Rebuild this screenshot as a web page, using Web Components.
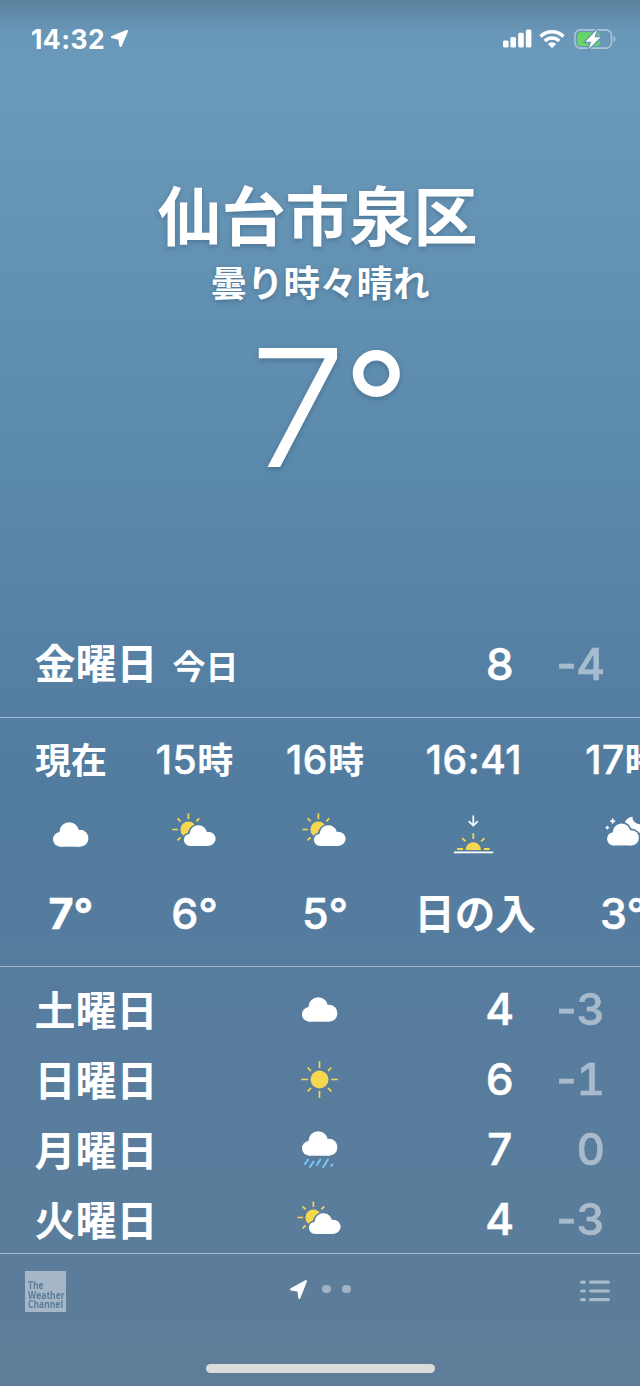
<!DOCTYPE html>
<html lang="ja">
<head>
<meta charset="utf-8">
<title>天気</title>
<style>
html,body{margin:0;padding:0}
body{width:640px;height:1386px;overflow:hidden;font-family:Inter,"Noto Sans CJK JP",sans-serif;color:#fff}
</style>
</head>
<body>
<weather-app></weather-app>
<script>
const define = (name, html, setup) => {
  const t = document.createElement('template');
  t.innerHTML = html;
  customElements.define(name, class extends HTMLElement {
    connectedCallback() {
      if (this.shadowRoot) return;
      const root = this.attachShadow({mode: 'open'});
      root.append(t.content.cloneNode(true));
      if (setup) setup(this, root);
    }
  });
};

const cloud = t => `<g transform="${t}"><circle cx="7.3" cy="17.4" r="7.3"/><circle cx="16.2" cy="9.9" r="9.7"/><circle cx="26.9" cy="16.2" r="8.5"/><rect x="7" y="12" width="20" height="12.7"/></g>`;
const masked = (t, w, h) => `<mask id="m" maskUnits="userSpaceOnUse" x="-2" y="-2" width="${w + 4}" height="${h + 4}"><rect x="-2" y="-2" width="${w + 4}" height="${h + 4}" fill="#fff"/><g fill="#000" stroke="#000" stroke-width="3.6">${cloud(t)}</g></mask>`;
const Y = '#f6d750';
const ICONS = {
  cloud: [36, 25, `<g fill="#fff">${cloud('')}</g>`],
  partly: [44, 33, masked('translate(11.8 12.2) scale(.9 .84)', 44, 33) +
    `<g mask="url(#m)"><circle cx="16.4" cy="16.4" r="8" fill="${Y}"/></g>
     <path d="M16.4.4V6M.4 16.5H6M5.6 5.4 8.6 8.4M27.2 5.4 24.4 8.4M5.6 27.4 8.6 24.4" stroke="${Y}" stroke-width="1.7"/>
     <g fill="#fff">${cloud('translate(11.8 12.2) scale(.9 .84)')}</g>`],
  sun: [37, 37, `<circle cx="18.5" cy="18.5" r="9" fill="${Y}"/><path d="M18.5.2V6.9M18.5 30.1V36.8M.2 18.5H6.9M30.1 18.5H36.8M6.7 6.7 10 10M30.3 6.7 27 10M6.7 30.3 10 27M30.3 30.3 27 27" stroke="${Y}" stroke-width="1.7"/>`],
  rain: [36, 37, `<g fill="#fff">${cloud('')}</g><path d="M6 28.6 3 33M11.6 30.6 7.9 36M18.3 28.6 15 33.8M25.9 28.6 21.2 36M30.3 33.6 29.4 34.8" stroke="#79c3f4" stroke-width="2.1" stroke-linecap="round"/>`],
  sunset: [39, 38, `<path d="M11.6 35A7.7 7.7 0 1 1 27 35Z" fill="${Y}"/><path d="M19.3 18.2V24M8.3 23.2 11.5 26.4M30.4 23.2 27.2 26.4M3.2 34H9M29.8 34H35.6" stroke="${Y}" stroke-width="1.8"/><path d="M19.3.6V10.2M14.7 6.2 19.3 10.6 23.9 6.2" fill="none" stroke="#fff" stroke-width="1.7"/><path d="M0 37.3H39.2" stroke="#fff" stroke-width="1.8"/>`],
  night: [36, 32, masked('translate(2 9.2) scale(.9)', 50, 32) +
    `<g mask="url(#m)"><path d="M27.6 2.4C23.2 3.3 20.2 6 19.4 9.6L22 18 34 19 41 13C42 11 41.6 10 41.6 9.4 33.6 12.2 26.5 8.2 27.6 2.4Z" fill="#fff"/></g>
     <path d="M7.7 4.3Q8.1 6.7 10.4 7.1 8.1 7.5 7.7 9.9 7.3 7.5 5 7.1 7.3 6.7 7.7 4.3ZM2.3 11.8Q2.6 13.4 4.2 13.7 2.6 14 2.3 15.6 2 14 .4 13.7 2 13.4 2.3 11.8Z" fill="#fff" stroke="#fff" stroke-width=".5"/>
     <g fill="#fff">${cloud('translate(2 9.2) scale(.9)')}</g>`],
  arrow: [17, 17, '<path d="M15.8 1.2 1.2 7.2 8.4 8.7 9.6 15.8Z" fill="#fff" stroke="#fff" stroke-width="2.4" stroke-linejoin="round"/>'],
  page: [17, 19, '<path d="M15.9 1.2 1.2 9.3 8.5 10.7 9.3 17.8Z" fill="#fff" stroke="#fff" stroke-width="2.2" stroke-linejoin="round"/>'],
  signal: [29, 19, '<g fill="#fff"><rect x="0" y="11.6" width="5.6" height="7" rx="1.5"/><rect x="7.4" y="8" width="5.6" height="10.6" rx="1.5"/><rect x="15.2" y="3.7" width="5.6" height="14.9" rx="1.5"/><rect x="22.8" y=".6" width="5.6" height="18" rx="1.5"/></g>'],
  wifi: [26, 19, '<g fill="none" stroke="#fff" stroke-width="3.5"><path d="M1.5 7.6A16.3 16.3 0 0 1 24.5 7.6"/><path d="M5.8 12A10.3 10.3 0 0 1 20.2 12"/></g><path d="M8.8 14.9A6 6 0 0 1 17.2 14.9L13 19Z" fill="#fff"/>'],
  battery: [42, 22, `<mask id="b"><rect width="42" height="22" fill="#fff"/><path d="M22.8 1.8 11.5 13.7H17.3L14.8 20.8 26.5 9.2H20.5Z" fill="#000" stroke="#000" stroke-width="3"/></mask>
    <g mask="url(#b)"><rect x=".9" y="1.9" width="36.6" height="18.2" rx="5.5" fill="none" stroke="#fff" stroke-opacity=".45" stroke-width="1.6"/><rect x="3.3" y="4.2" width="22.5" height="13.7" rx="3" fill="#65d763"/></g>
    <path d="M39.5 8V14Q41.5 13.3 41.5 11 41.5 8.7 39.5 8Z" fill="#fff" fill-opacity=".45"/>
    <path d="M22.8 1.8 11.5 13.7H17.3L14.8 20.8 26.5 9.2H20.5Z" fill="#fff"/>`],
  list: [30, 22, '<g stroke="#fff" stroke-opacity=".48" stroke-width="3.2" stroke-linecap="round"><path d="M1.7 2.2H4.3M10.6 2.2H28.3M1.7 11H4.3M10.6 11H28.3M1.7 19.7H4.3M10.6 19.7H28.3"/></g>']
};

define('wx-icon', '<style>:host{display:block;flex:none;line-height:0}svg{display:block;overflow:visible}</style><span></span>', (el, root) => {
  const [w, h, body] = ICONS[el.getAttribute('name')];
  root.querySelector('span').innerHTML = `<svg width="${w}" height="${h}" viewBox="0 0 ${w} ${h}">${body}</svg>`;
});

define('status-bar', `<style>
:host{display:flex;height:77px;box-sizing:border-box;padding:0 24px 0 31px;align-items:center}
.time{font-size:26.5px;font-weight:700;letter-spacing:.4px;width:80px;white-space:nowrap}
.right{margin-left:auto;display:flex;align-items:center;gap:9px}
.right :first-child{margin-right:-1.5px}
</style><div class="time">14:32</div><wx-icon name="arrow"></wx-icon>
<div class="right"><wx-icon name="signal"></wx-icon><wx-icon name="wifi"></wx-icon><wx-icon name="battery"></wx-icon></div>`);

define('city-header', `<style>
:host{display:flex;flex-direction:column;align-items:center;height:534px;box-sizing:border-box;padding-top:102px;text-shadow:0 2px 5px rgba(20,50,80,.3)}
h1{margin:0;font-size:64px;line-height:76px;font-weight:700;margin-right:5px}
p{margin:0;font-size:36.5px;line-height:56px;font-weight:700;padding-top:1px}
.temp{display:flex;font-size:164px;line-height:160px;font-weight:300;margin:16px 0 0 21px}
.num{transform:scaleX(1.05)}
.deg{font-size:143px;font-weight:400;margin-top:-5px}
</style><h1><slot name="city"></slot></h1><p><slot name="sky"></slot></p>
<div class="temp"><div class="num"><slot name="temp"></slot></div><span class="deg">°</span></div>`);

define('day-row', `<style>
:host{display:grid;grid-template-columns:260px 119px 1fr 91px;align-items:center;height:70px;padding:0 35px;box-sizing:border-box;font-size:44px;font-weight:500;font-variant-numeric:tabular-nums}
.name{display:flex;align-items:baseline;font-size:41px;line-height:60px;font-weight:700;white-space:nowrap;padding-top:3px;margin-left:-.5px}
.note{font-size:33px;margin-left:15px;padding-top:1px}
.hi,.lo{text-align:right;line-height:60px;margin-top:-1px;-webkit-text-stroke:.6px #fff}.lo{opacity:.48}
.minus{font-variant-numeric:normal}
.ic{display:flex;justify-content:center;width:50px}
.partly{margin:-4px 0 0 -2px}
.sun{margin-left:-2px}
</style><div class="name"><slot></slot><span class="note"></span></div><div class="ic"></div><div class="hi"></div><div class="lo"><span class="minus"></span><span class="n"></span></div>`, (el, root) => {
  root.querySelector('.hi').textContent = el.getAttribute('hi');
  const lo = el.getAttribute('lo');
  if (lo[0] === '-') root.querySelector('.minus').textContent = '-'; else root.querySelector('.minus').remove();
  root.querySelector('.n').textContent = lo.replace('-', '');
  const note = root.querySelector('.note');
  if (el.hasAttribute('note')) note.textContent = el.getAttribute('note'); else note.remove();
  if (el.hasAttribute('icon')) {
    const i = document.createElement('wx-icon');
    i.setAttribute('name', el.getAttribute('icon'));
    i.className = el.getAttribute('icon');
    root.querySelector('.ic').append(i);
  }
});

define('hour-cell', `<style>
:host{display:flex;flex-direction:column;align-items:center;font-weight:500;white-space:nowrap}
:host([now]){font-weight:700}
.t{font-size:39px;line-height:50px;height:50px;margin-top:17px;letter-spacing:.6px}
.num{-webkit-text-stroke:.5px #fff}
.unit{font-size:36px;font-weight:700;letter-spacing:0}
.i{height:64px;margin-top:16px;display:flex;align-items:center}
.partly{margin:-7px 0 0 -2px}.cloud{margin-top:3px}.sunset{margin:1px 0 0 -2px}.night{margin-top:-6px}
.v{font-size:43px;line-height:56px;height:56px;margin-top:20px;-webkit-text-stroke:.6px #fff}
:host([word]) .v{font-size:40.6px;font-weight:700;padding-top:2px;margin-left:2px;-webkit-text-stroke:0}
</style><div class="t"><span class="num"></span><span class="unit"></span></div><div class="i"></div><div class="v"><slot></slot></div>`, (el, root) => {
  root.querySelector('.num').textContent = el.getAttribute('time') || '';
  root.querySelector('.unit').textContent = el.getAttribute('unit') || '';
  const i = document.createElement('wx-icon');
  i.setAttribute('name', el.getAttribute('icon'));
  i.className = el.getAttribute('icon');
  root.querySelector('.i').append(i);
});

define('hour-strip', `<style>
:host{display:grid;grid-template-columns:132px 115px 146px 152px 146px;height:250px;padding-left:5px;box-sizing:border-box;overflow:hidden;border:solid rgba(255,255,255,.45);border-width:1px 0}
</style><slot></slot>`);

define('page-footer', `<style>
:host{display:block;height:133px;box-sizing:border-box;border-top:1px solid rgba(255,255,255,.45)}
.bar{display:grid;grid-template-columns:1fr auto 1fr;height:75px;padding:0 30px 0 25px;align-items:center}
.logo{width:41px;height:41px;box-sizing:border-box;padding:10px 0 0 3px;background:rgba(255,255,255,.45);color:#5b7d9b;font:700 10.4px/9.5px "Open Sans",sans-serif}
.logo div{width:46px;transform:scaleX(.82);transform-origin:0 0;white-space:nowrap}
.pages{display:flex;align-items:center;padding-left:6px;margin-top:-5px}
.pages i{width:8.6px;height:8.6px;border-radius:50%;background:rgba(255,255,255,.42);margin-left:11.8px}
.pages wx-icon{margin-right:3px}
.list{justify-self:end;margin-top:-1px}
.home{width:229px;height:9px;border-radius:5px;background:#dcdcdc;margin:35px 0 0 205.5px}
</style><div class="bar"><div class="logo"><div>The</div><div>Weather</div><div>Channel</div></div>
<div class="pages"><wx-icon name="page"></wx-icon><i></i><i></i></div><wx-icon class="list" name="list"></wx-icon></div><div class="home"></div>`);

define('weather-app', `<style>
:host{display:flex;flex-direction:column;width:640px;height:1386px;overflow:hidden;background:linear-gradient(#5b829d 0,#628ba9 14px,#6997b8 32px,#6a99bb 80px,#6795b6 180px,#5b89ab 480px,#5681a4 640px,#517c9f 790px,#567c9e 960px,#5b7d9b 1260px,#5e7d98 1386px)}
.today{height:106px;display:flex;flex-direction:column;padding-top:18px;box-sizing:border-box}
.week{height:286px;padding-top:7px;box-sizing:border-box;overflow:hidden}
</style><status-bar></status-bar>
<city-header><span slot="city">仙台市泉区</span><span slot="sky">曇り時々晴れ</span><span slot="temp">7</span></city-header>
<div class="today"><day-row hi="8" lo="-4" note="今日">金曜日</day-row></div>
<hour-strip>
<hour-cell now icon="cloud" unit="現在">7°</hour-cell>
<hour-cell icon="partly" time="15" unit="時">6°</hour-cell>
<hour-cell icon="partly" time="16" unit="時">5°</hour-cell>
<hour-cell word icon="sunset" time="16:41">日の入</hour-cell>
<hour-cell icon="night" time="17" unit="時">3°</hour-cell>
</hour-strip>
<div class="week">
<day-row icon="cloud" hi="4" lo="-3">土曜日</day-row>
<day-row icon="sun" hi="6" lo="-1">日曜日</day-row>
<day-row icon="rain" hi="7" lo="0">月曜日</day-row>
<day-row icon="partly" hi="4" lo="-3">火曜日</day-row>
</div>
<page-footer></page-footer>`);
</script>
</body>
</html>
